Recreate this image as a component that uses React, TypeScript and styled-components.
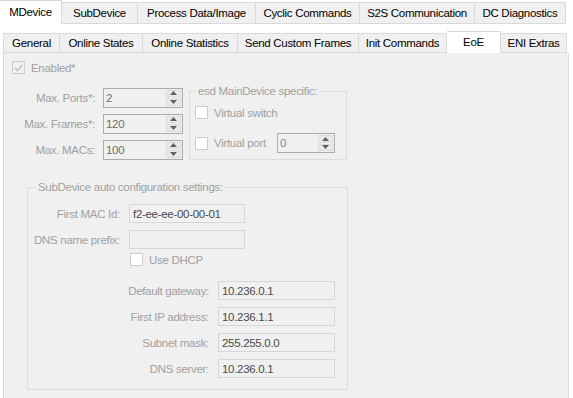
import React from "react";
import styled, { createGlobalStyle } from "styled-components";

const GlobalStyle = createGlobalStyle`
  html, body {
    margin: 0;
    padding: 0;
    background: #ffffff;
  }
  body {
    font-family: "Liberation Sans", Arial, sans-serif;
    font-size: 11.5px;
    letter-spacing: -0.3px;
    color: #000;
  }
`;

const Window = styled.div`
  width: 573px;
  height: 398px;
  overflow: hidden;
  background: #ffffff;
  display: flex;
  flex-direction: column;
`;

const TabStrip = styled.div<{ $height: number; $inset: number; $top: number }>`
  display: flex;
  align-items: flex-end;
  height: ${(p) => p.$height}px;
  margin-top: ${(p) => p.$top}px;
  padding-left: ${(p) => p.$inset}px;
  flex-shrink: 0;
`;

const Tab = styled.div<{ $w: number; $h: number; $active?: boolean; $first?: boolean }>`
  box-sizing: border-box;
  width: ${(p) => p.$w}px;
  height: ${(p) => (p.$active ? p.$h + 2 : p.$h)}px;
  display: flex;
  align-items: center;
  justify-content: center;
  white-space: nowrap;
  background: ${(p) => (p.$active ? "#ffffff" : "#f0f0f0")};
  border-top: 1px solid #d9d9d9;
  border-right: 1px solid #d9d9d9;
  border-left: ${(p) => (p.$first ? "1px solid #d9d9d9" : "none")};
  border-bottom: ${(p) => (p.$active ? "none" : "1px solid #d9d9d9")};
  padding-bottom: ${(p) => (p.$active ? 2 : 0)}px;
`;

const Page = styled.div`
  box-sizing: border-box;
  width: 566px;
  margin-left: 3px;
  flex: 1;
  background: #f0f0f0;
  border-left: 1px solid #d9d9d9;
  border-right: 1px solid #d9d9d9;
  padding: 8px 0 0 8px;
  color: #a0a0a0;
`;

const CheckRow = styled.label<{ $indent?: number; $top?: number }>`
  display: flex;
  align-items: center;
  gap: 6px;
  margin-left: ${(p) => p.$indent ?? 0}px;
  margin-top: ${(p) => p.$top ?? 0}px;
  height: 13px;
  white-space: nowrap;
`;

const Box = styled.span<{ $bg: string }>`
  box-sizing: border-box;
  width: 13px;
  height: 13px;
  border: 1px solid #cccccc;
  background: ${(p) => p.$bg};
  display: inline-flex;
  align-items: center;
  justify-content: center;
  flex-shrink: 0;
`;

const CheckText = styled.span<{ $w?: number }>`
  display: inline-block;
  width: ${(p) => (p.$w ? `${p.$w}px` : "auto")};
`;

const Upper = styled.div`
  display: flex;
  align-items: flex-start;
  margin-top: 9px;
`;

const FormGrid = styled.div<{ $labelW: number; $inputW: number; $top: number; $gap: number }>`
  display: grid;
  grid-template-columns: ${(p) => p.$labelW}px ${(p) => p.$inputW}px;
  grid-auto-rows: 19px;
  column-gap: ${(p) => p.$gap}px;
  row-gap: 7px;
  padding-top: ${(p) => p.$top}px;
  align-items: center;
`;

const Label = styled.span`
  text-align: right;
  white-space: nowrap;
`;

const TextBox = styled.div`
  box-sizing: border-box;
  height: 19px;
  border: 1px solid #d6d6d6;
  background: #f0f0f0;
  color: #4a4a4a;
  padding-left: 3px;
  display: flex;
  align-items: center;
  white-space: nowrap;
`;

const Spin = styled.div<{ $w: number; $color?: string }>`
  box-sizing: border-box;
  width: ${(p) => p.$w}px;
  height: 20px;
  border: 1px solid #ababab;
  background: #f0f0f0;
  color: ${(p) => p.$color ?? "#6d6d6d"};
  display: flex;
  align-items: center;
  padding-left: 2px;
`;

const SpinValue = styled.span`
  flex: 1;
`;

const SpinButtons = styled.div`
  width: 15px;
  height: 16px;
  margin-right: 1px;
  display: flex;
  flex-direction: column;
  gap: 1px;
`;

const SpinButton = styled.div`
  flex: 1;
  background: #e9e9e9;
  border: 1px solid #dcdcdc;
  display: flex;
  align-items: center;
  justify-content: center;
`;

const Group = styled.fieldset<{ $w: number; $h: number; $left: number; $top?: number }>`
  box-sizing: border-box;
  width: ${(p) => p.$w}px;
  height: ${(p) => p.$h}px;
  margin: ${(p) => p.$top ?? 0}px 0 0 ${(p) => p.$left}px;
  padding: 0;
  border: 1px solid #dcdcdc;
  min-inline-size: auto;
`;

const Legend = styled.legend<{ $offset: number }>`
  margin-left: ${(p) => p.$offset}px;
  padding: 0 2px;
  line-height: 16px;
  white-space: nowrap;
`;

const GroupBody = styled.div<{ $pad: string }>`
  padding: ${(p) => p.$pad};
  display: flex;
  flex-direction: column;
`;

const PortRow = styled.div`
  display: flex;
  align-items: center;
  margin-top: 14px;
`;

function Arrow({ up }: { up?: boolean }) {
  return (
    <svg width="7" height="4" viewBox="0 0 7 4">
      <path d={up ? "M0 4 L3.5 0 L7 4 Z" : "M0 0 L3.5 4 L7 0 Z"} fill="#606060" />
    </svg>
  );
}

function CheckBox({ checked, bg }: { checked?: boolean; bg: string }) {
  return (
    <Box $bg={bg}>
      {checked && (
        <svg width="9" height="8" viewBox="0 0 9 8">
          <path d="M0.8 4 L3.4 6.6 L8.3 0.8" stroke="#bdbdbd" strokeWidth="1.3" fill="none" />
        </svg>
      )}
    </Box>
  );
}

function SpinBox({ value, w, color }: { value: string; w: number; color?: string }) {
  return (
    <Spin $w={w} $color={color}>
      <SpinValue>{value}</SpinValue>
      <SpinButtons>
        <SpinButton>
          <Arrow up />
        </SpinButton>
        <SpinButton>
          <Arrow />
        </SpinButton>
      </SpinButtons>
    </Spin>
  );
}

const mainTabs = [
  { name: "MDevice", w: 62 },
  { name: "SubDevice", w: 76 },
  { name: "Process Data/Image", w: 118 },
  { name: "Cyclic Commands", w: 104 },
  { name: "S2S Communication", w: 115 },
  { name: "DC Diagnostics", w: 91 },
];

const subTabs = [
  { name: "General", w: 57 },
  { name: "Online States", w: 83 },
  { name: "Online Statistics", w: 95 },
  { name: "Send Custom Frames", w: 121 },
  { name: "Init Commands", w: 88 },
  { name: "EoE", w: 54 },
  { name: "ENI Extras", w: 66 },
];

const limits = [
  { label: "Max. Ports*:", value: "2" },
  { label: "Max. Frames*:", value: "120" },
  { label: "Max. MACs:", value: "100" },
];

const network = [
  { label: "Default gateway:", value: "10.236.0.1" },
  { label: "First IP address:", value: "10.236.1.1" },
  { label: "Subnet mask:", value: "255.255.0.0" },
  { label: "DNS server:", value: "10.236.0.1" },
];

export default function App() {
  return (
    <Window>
      <GlobalStyle />
      <TabStrip $height={24} $inset={0} $top={0}>
        {mainTabs.map((t, i) => (
          <Tab key={t.name} $w={t.w} $h={22} $active={i === 0}>
            {t.name}
          </Tab>
        ))}
      </TabStrip>
      <TabStrip $height={22} $inset={3} $top={7}>
        {subTabs.map((t, i) => (
          <Tab key={t.name} $w={t.w} $h={20} $first={i === 0} $active={t.name === "EoE"}>
            {t.name}
          </Tab>
        ))}
      </TabStrip>
      <Page>
        <CheckRow>
          <CheckBox checked bg="#f0f0f0" />
          <CheckText>Enabled*</CheckText>
        </CheckRow>

        <Upper>
          <FormGrid $labelW={83} $inputW={80} $gap={8} $top={5}>
            {limits.map((r) => (
              <React.Fragment key={r.label}>
                <Label>{r.label}</Label>
                <SpinBox value={r.value} w={80} />
              </React.Fragment>
            ))}
          </FormGrid>
          <Group $w={158} $h={77} $left={6}>
            <Legend $offset={6}>esd MainDevice specific:</Legend>
            <GroupBody $pad="7px 0 0 5px">
              <CheckRow>
                <CheckBox bg="#ffffff" />
                <CheckText>Virtual switch</CheckText>
              </CheckRow>
              <PortRow>
                <CheckRow>
                  <CheckBox bg="#ffffff" />
                  <CheckText $w={63}>Virtual port</CheckText>
                </CheckRow>
                <SpinBox value="0" w={58} color="#6f87b8" />
              </PortRow>
            </GroupBody>
          </Group>
        </Upper>

        <Group $w={321} $h={211} $left={15} $top={19}>
          <Legend $offset={8}>SubDevice auto configuration settings:</Legend>
          <GroupBody $pad="9px 0 0 0">
            <FormGrid $labelW={92} $inputW={116} $gap={9} $top={0}>
              <Label>First MAC Id:</Label>
              <TextBox>f2-ee-ee-00-00-01</TextBox>
              <Label>DNS name prefix:</Label>
              <TextBox />
            </FormGrid>
            <CheckRow $indent={102} $top={4}>
              <CheckBox bg="#ffffff" />
              <CheckText>Use DHCP</CheckText>
            </CheckRow>
            <FormGrid $labelW={181} $inputW={117} $gap={9} $top={15}>
              {network.map((r) => (
                <React.Fragment key={r.label}>
                  <Label>{r.label}</Label>
                  <TextBox>{r.value}</TextBox>
                </React.Fragment>
              ))}
            </FormGrid>
          </GroupBody>
        </Group>
      </Page>
    </Window>
  );
}
